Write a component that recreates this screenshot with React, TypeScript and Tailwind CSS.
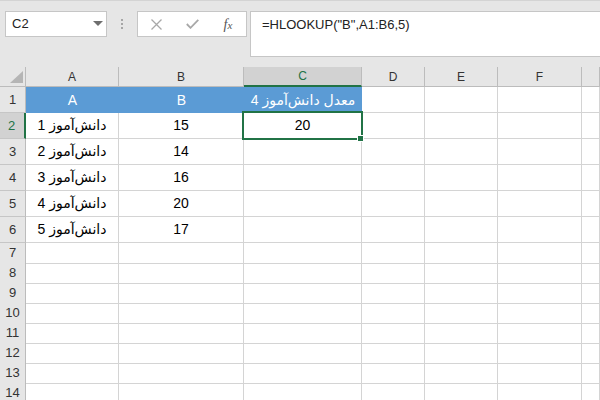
import React from 'react'

const cols = ['A', 'B', 'C', 'D', 'E', 'F', '']

const data: { a: string; b: string; c: string }[] = [
  { a: 'A', b: 'B', c: 'معدل دانش‌آموز 4' },
  { a: 'دانش‌آموز 1', b: '15', c: '20' },
  { a: 'دانش‌آموز 2', b: '14', c: '' },
  { a: 'دانش‌آموز 3', b: '16', c: '' },
  { a: 'دانش‌آموز 4', b: '20', c: '' },
  { a: 'دانش‌آموز 5', b: '17', c: '' },
]

const gridCols = 'grid grid-cols-[26px_93px_125px_118px_63px_73px_84px_1fr]'

function FormulaBar() {
  return (
    <div className="flex h-[67px] items-start border-t border-[#d4d4d4] bg-[#e6e6e6] pl-[5px] pt-[10px]">
      <div className="relative flex h-[26px] w-[102px] items-center border border-[#c6c6c6] bg-white pl-[6px] text-[13px] text-[#222]">
        C2
        <svg className="absolute left-[87px] top-[9px]" width="10" height="6" viewBox="0 0 10 6">
          <path d="M0 0 L10 0 L5 5 Z" fill="#6e6e6e" />
        </svg>
      </div>
      <div className="flex h-[26px] w-[30px] flex-col items-center justify-center gap-[2px]">
        <span className="h-[2px] w-[2px] bg-[#a6a6a6]" />
        <span className="h-[2px] w-[2px] bg-[#a6a6a6]" />
        <span className="h-[2px] w-[2px] bg-[#a6a6a6]" />
      </div>
      <div className="flex h-[26px] w-[110px] items-center border border-[#c6c6c6] bg-white">
        <div className="flex w-[36px] justify-center">
          <svg width="11" height="11" viewBox="0 0 11 11">
            <path d="M0.5 0.5 L10.5 10.5 M10.5 0.5 L0.5 10.5" stroke="#a8a8a8" strokeWidth="1.3" />
          </svg>
        </div>
        <div className="flex w-[36px] justify-center">
          <svg width="13" height="10" viewBox="0 0 13 10">
            <path d="M0.8 5 L4.5 8.8 L12.3 0.8" stroke="#a8a8a8" strokeWidth="1.8" fill="none" />
          </svg>
        </div>
        <div className="flex w-[36px] justify-center font-['Liberation_Serif',serif] text-[14px] italic text-[#555]">
          <span>f</span>
          <span className="mt-[3px] text-[11px]">x</span>
        </div>
      </div>
      <div className="-mr-[4px] ml-[3px] h-[46px] flex-1 border border-[#c6c6c6] bg-white pl-[11px] pt-[3px] text-[13px] text-[#222]">
        =HLOOKUP("B",A1:B6,5)
      </div>
    </div>
  )
}

function HeaderRow() {
  return (
    <div className={`${gridCols} h-[20px] bg-[#e6e6e6]`}>
      <div className="relative border-b border-r border-[#bcbcbc]">
        <svg className="absolute left-[10px] top-[4px]" width="13" height="12" viewBox="0 0 13 12">
          <path d="M13 0 L13 12 L0 12 Z" fill="#b5b5b5" />
        </svg>
      </div>
      {cols.map((c, i) =>
        c === 'C' ? (
          <div
            key={i}
            className="flex items-center justify-center border-b-2 border-r border-b-[#217346] border-r-[#bcbcbc] bg-[#d2d2d2] text-[12px] text-[#217346]"
          >
            {c}
          </div>
        ) : (
          <div
            key={i}
            className="flex items-center justify-center border-b border-r border-[#bcbcbc] text-[12px] text-[#333]"
          >
            {c}
          </div>
        ),
      )}
    </div>
  )
}

function RowHead({ n, selected }: { n: number; selected?: boolean }) {
  return selected ? (
    <div className="flex items-center justify-center border-b border-r-2 border-b-[#c6c6c6] border-r-[#217346] bg-[#d2d2d2] pr-[1px] text-[13px] text-[#217346]">
      {n}
    </div>
  ) : (
    <div className="flex items-center justify-center border-b border-r border-b-[#c6c6c6] border-r-[#bcbcbc] bg-[#e6e6e6] text-[13px] text-[#333]">
      {n}
    </div>
  )
}

function Cell({ text }: { text?: string }) {
  return (
    <div
      dir="rtl"
      className="flex items-center justify-center whitespace-nowrap border-b border-r border-[#d4d4d4] text-[14px] text-black"
    >
      {text}
    </div>
  )
}

function BlueCell({ text }: { text: string }) {
  return (
    <div
      dir="rtl"
      className="flex items-center justify-center whitespace-nowrap bg-[#5b9bd5] text-[14px] text-white"
    >
      {text}
    </div>
  )
}

export default function App() {
  return (
    <div className="relative h-[400px] w-[600px] overflow-hidden bg-white font-['Liberation_Sans','DejaVu_Sans',sans-serif]">
      <FormulaBar />
      <HeaderRow />
      {data.map((r, i) => (
        <div key={i} className={`${gridCols} h-[26px]`}>
          <RowHead n={i + 1} selected={i === 1} />
          {i === 0 ? (
            <>
              <BlueCell text={r.a} />
              <BlueCell text={r.b} />
              <BlueCell text={r.c} />
            </>
          ) : (
            <>
              <Cell text={r.a} />
              <Cell text={r.b} />
              <Cell text={r.c} />
            </>
          )}
          <Cell />
          <Cell />
          <Cell />
          <Cell />
        </div>
      ))}
      {[7, 8, 9, 10, 11, 12, 13, 14].map((n) => (
        <div key={n} className={`${gridCols} h-[20px]`}>
          <RowHead n={n} />
          <Cell />
          <Cell />
          <Cell />
          <Cell />
          <Cell />
          <Cell />
          <Cell />
        </div>
      ))}
      <div className="absolute left-[242px] top-[111px] h-[29px] w-[121px] border-2 border-[#217346]" />
      <div className="absolute left-[357px] top-[135px] h-[7px] w-[7px] border border-white bg-[#217346]" />
    </div>
  )
}
